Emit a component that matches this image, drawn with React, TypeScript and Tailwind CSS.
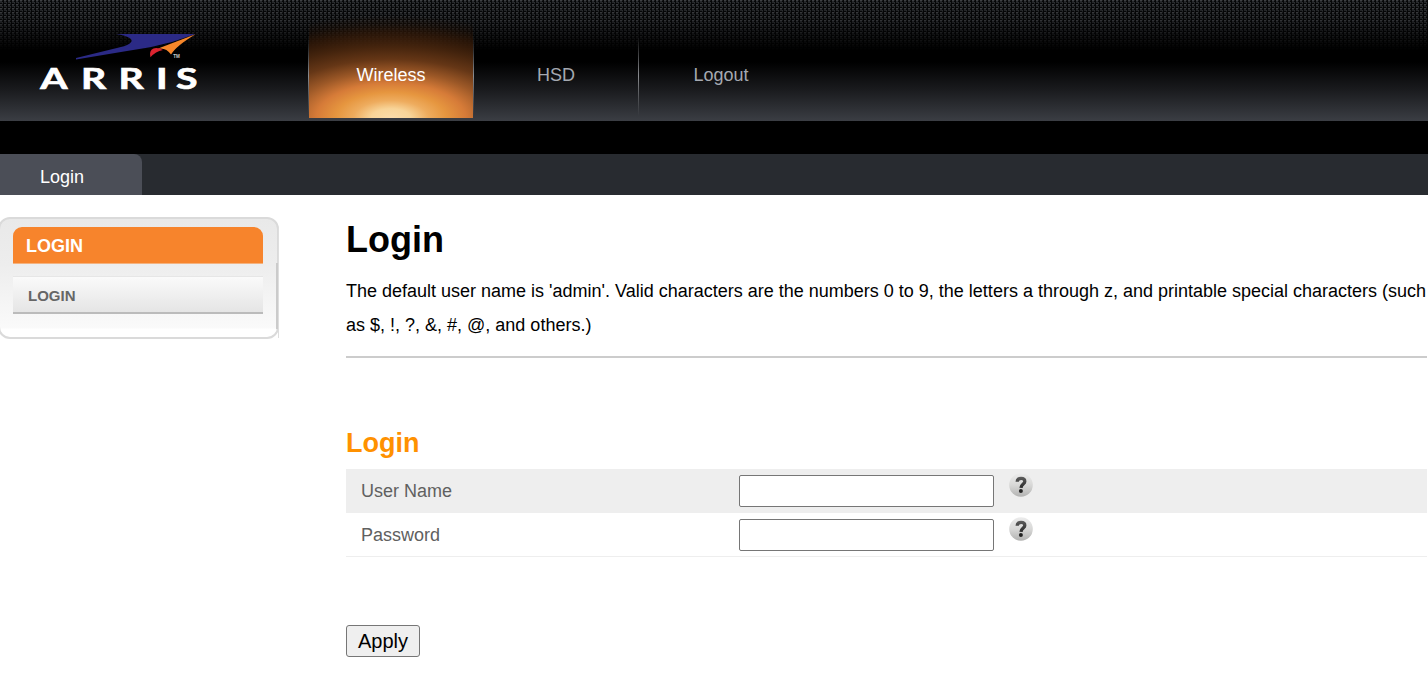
import React from "react";

function Logo() {
  return (
    <svg width="168" height="66" viewBox="36 30 168 66" aria-label="ARRIS" className="block">
      <path d="M76 58L124 46.3Q135 42.5 130 38.3Q126 35.5 116 34H195.5L172 42L150 47.2L127 51L100 55.4L76 59.4Z" fill="#2b2a86" />
      <path d="M195.5 34.2L157.5 48.8Q166 47 171 54.5Q176 46 195.5 34.2Z" fill="#f6862a" />
      <path d="M150.4 57.3Q148.8 50.5 153.5 48.4Q158.5 47.4 163 50Q155.5 51.5 150.4 57.3Z" fill="#dc2430" />
      <text x="173.3" y="58" fontSize="4.6" fontWeight="700" fill="#ccc" fontFamily="Liberation Sans, sans-serif">TM</text>
      <text
        transform="scale(1.33 1)"
        x="30.2 61 89.1 117.3 132.3"
        y="89.3"
        fontSize="29.5"
        fontWeight="700"
        fill="#fff"
        stroke="#fff"
        strokeWidth=".7"
        fontFamily="Lato, sans-serif"
      >
        ARRIS
      </text>
    </svg>
  );
}

function Mesh() {
  return (
    <svg width="100%" height="50" className="absolute inset-x-0 top-0">
      <defs>
        <pattern id="mesh" width="4" height="4" patternUnits="userSpaceOnUse">
          <rect width="4" height="4" fill="#060708" />
          <rect x="0" y="0" width="2" height="1" fill="#3e4043" />
          <rect x="0" y="1" width="2" height="2" fill="#26282b" />
          <rect x="2" y="2" width="1" height="1" fill="#2e3133" />
          <rect x="2" y="3" width="1" height="1" fill="#202224" />
          <rect x="2" y="0" width="1" height="1" fill="#1a1b1d" />
        </pattern>
        <linearGradient id="meshFade" x1="0" y1="0" x2="0" y2="1">
          <stop offset="0" stopColor="#000" stopOpacity="0" />
          <stop offset=".4" stopColor="#000" stopOpacity=".2" />
          <stop offset="1" stopColor="#000" stopOpacity="1" />
        </linearGradient>
      </defs>
      <rect width="100%" height="50" fill="url(#mesh)" />
      <rect width="100%" height="50" fill="url(#meshFade)" />
    </svg>
  );
}

function Help() {
  return (
    <svg width="24" height="24" viewBox="0 0 24 24" className="block">
      <defs>
        <linearGradient id="ball" x1="0" y1="0" x2="0" y2="1">
          <stop offset="0" stopColor="#ececec" />
          <stop offset=".5" stopColor="#d8d8d7" />
          <stop offset="1" stopColor="#b2b2b1" />
        </linearGradient>
        <linearGradient id="mark" x1="0" y1="4" x2="0" y2="19" gradientUnits="userSpaceOnUse">
          <stop offset="0" stopColor="#5c5c5c" />
          <stop offset="1" stopColor="#181818" />
        </linearGradient>
      </defs>
      <circle cx="12" cy="12" r="11.8" fill="url(#ball)" />
      <path d="M8.2 8.8C8.2 6.3 9.8 5.4 12.1 5.4C14.5 5.4 15.8 6.6 15.8 8.4C15.8 11 12.2 11 12 14.8" fill="none" stroke="url(#mark)" strokeWidth="3.3" />
      <circle cx="11.9" cy="17.9" r="2" fill="#222" />
    </svg>
  );
}

const divider = "w-px h-20 mt-9 shrink-0 bg-gradient-to-b from-transparent via-[#8a8c90] to-transparent";

function Field({ label, type, className }: { label: string; type: string; className: string }) {
  return (
    <div className={"flex h-11 pl-[15px] text-[18px] text-[#606060] " + className}>
      <label className="w-[378px] leading-[44px]">{label}</label>
      <input type={type} aria-label={label} className="mt-1.5 h-8 w-[255px] rounded-[2px] border border-[#767676] bg-white px-1 text-black" />
      <div className="ml-[15px] mt-1">
        <Help />
      </div>
    </div>
  );
}

export default function App() {
  return (
    <div className="h-[683px] w-full overflow-hidden bg-white font-['Liberation_Sans',Arial,sans-serif] text-black">
      <header className="relative h-[121px] bg-[linear-gradient(to_bottom,#000_0px,#000_62px,#1a1b1e_90px,#3b3e44_121px)]">
        <Mesh />
        <div className="relative flex h-full">
          <div className="w-[308px] shrink-0 pl-9 pt-[30px]">
            <Logo />
          </div>
          <nav className="flex text-[18px] leading-[21px] text-[#a5a9b1]">
            <div className={divider} />
            <a className="h-[118px] w-[164px] bg-[radial-gradient(ellipse_220px_103px_at_50%_100%,#fbdcaa_0%,#f8d498_9%,#eeac5e_17%,#e6963f_25%,#d67b38_34%,rgba(164,92,40,0.95)_45%,rgba(112,60,24,0.9)_57%,rgba(78,41,15,0.86)_70%,rgba(56,28,9,0.7)_82%,rgba(40,20,6,0.35)_91%,rgba(0,0,0,0)_100%)] pt-[65px] text-center text-white">
              Wireless
            </a>
            <div className={divider} />
            <a className="w-[164px] pt-[65px] text-center">HSD</a>
            <div className={divider} />
            <a className="w-[164px] pt-[65px] text-center">Logout</a>
          </nav>
        </div>
      </header>
      <div className="h-[33px] bg-black" />
      <div className="flex h-[41px] bg-[#282b30]">
        <div className="w-[142px] rounded-tr-[8px] bg-[#4b4e57] pl-10 text-[18px] leading-[46px] text-white">Login</div>
      </div>
      <div className="flex">
        <aside className="w-[346px] shrink-0 pt-[22px]">
          <div className="-ml-0.5 flex h-[122px] w-[281px]">
            <div className="h-full flex-1 rounded-[12px] border-2 border-[#dadada] bg-[linear-gradient(to_bottom,#e9e9e9_0px,#ededed_45px,#fafafa_109px,#fff_110px)] pl-[13px] pt-2">
              <div className="h-[37px] w-[250px] rounded-t-[9px] border-b border-[#f4b27e] bg-[#f7842c] pl-[13px] text-[18px] font-bold leading-[38px] text-white">
                LOGIN
              </div>
              <div className="mt-3 h-[38px] w-[250px] border-b-2 border-t border-t-[#e6e6e6] border-b-[#bbb] bg-gradient-to-b from-[#fafafa] to-[#e5e5e5] pl-[15px] text-[15px] font-bold leading-[37px] text-[#666]">
                LOGIN
              </div>
            </div>
            <div className="-ml-[3px] mt-[46px] h-[66px] w-0.5 bg-[#cbcbcb]" />
            <div className="mt-[10px] h-[111px] w-px bg-[#dedede]" />
          </div>
        </aside>
        <main className="min-w-0 flex-1 pr-px">
          <h1 className="pt-[24px] text-[36px] font-bold leading-[42px]">Login</h1>
          <p className="-mr-px mt-[13px] whitespace-nowrap text-[18px] leading-[34px]">
            The default user name is 'admin'. Valid characters are the numbers 0 to 9, the letters a through z, and printable special characters (such
            <br />
            as $, !, ?, &amp;, #, @, and others.)
          </p>
          <div className="mt-[14px] h-0.5 bg-[#ccc]" />
          <h2 className="mt-[70px] text-[27px] font-bold leading-[30px] text-[#ff9100]">Login</h2>
          <form className="mt-[11px]" onSubmit={(e) => e.preventDefault()}>
            <Field label="User Name" type="text" className="bg-[#eee]" />
            <Field label="Password" type="password" className="border-b border-[#eee]" />
            <button className="mt-[68px] h-8 w-[74px] rounded-[3px] border border-[#767676] bg-[#efefef] text-[20px] leading-[30px]">Apply</button>
          </form>
        </main>
      </div>
    </div>
  );
}
